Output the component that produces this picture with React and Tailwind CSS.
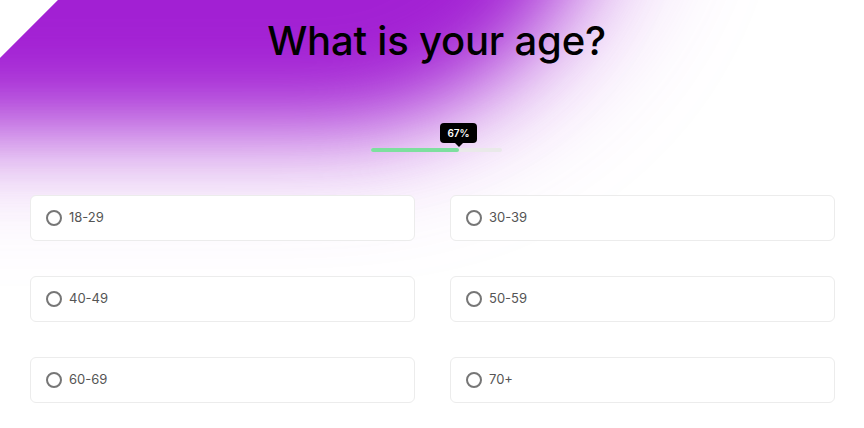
import React from "react";

const options = ["18-29", "30-39", "40-49", "50-59", "60-69", "70+"];

function Option({ label }) {
  return (
    <label className="flex h-[46px] cursor-pointer items-center gap-[7px] rounded-[6px] border border-[#ececec] bg-white pl-[15px]">
      <span className="box-border block h-[16px] w-[16px] rounded-full border-2 border-[#767676]" />
      <span className="text-[13px] text-[#555555]">{label}</span>
    </label>
  );
}

export default function App() {
  return (
    <div
      className="relative min-h-[428px] w-full overflow-hidden bg-white"
      style={{ fontFamily: "Inter, 'Noto Sans', sans-serif" }}
    >
      {/* decorative purple glow */}
      <div
        className="pointer-events-none absolute left-0 top-0 h-[320px] w-full overflow-hidden"
        style={{ clipPath: "polygon(58px 0, 100% 0, 100% 100%, 0 100%, 0 58px)" }}
      >
        <div className="absolute left-[-140px] top-[-180px] h-[335px] w-[800px] rounded-br-[320px] bg-[#a220d3]/30 blur-[60px]" />
        <div className="absolute left-[-140px] top-[-160px] h-[280px] w-[730px] rounded-br-[260px] bg-[#a220d3] blur-[42px]" />
      </div>

      <div className="relative flex flex-col items-center pl-[9px] pt-[17px]">
        <h1 className="text-[40px] font-medium leading-[48px] tracking-[-0.005em] text-black">
          What is your age?
        </h1>

        <div className="relative mt-[83px] h-[4px] w-[131px] rounded-full bg-[#e9e9e9]">
          <div className="h-full w-[67%] rounded-full bg-[#7ddf9f]" />
          <div className="absolute left-[69px] top-[-25px] flex h-[20px] w-[37px] items-center justify-center rounded-[4px] bg-black text-[10px] font-semibold text-white">
            67%
            <span className="absolute bottom-[-4px] left-1/2 h-0 w-0 -translate-x-1/2 border-x-[4px] border-t-[4px] border-x-transparent border-t-black" />
          </div>
        </div>
      </div>

      <div className="relative mt-[43px] grid grid-cols-2 gap-x-[35px] gap-y-[35px] pl-[30px] pr-[29px]">
        {options.map((o) => (
          <Option key={o} label={o} />
        ))}
      </div>
    </div>
  );
}
